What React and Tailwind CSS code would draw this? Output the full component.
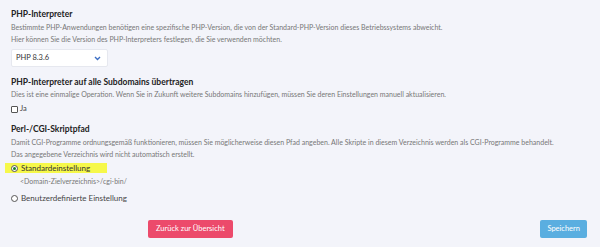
import React, { useState } from "react";

const font = { fontFamily: "Lato, 'Open Sans', sans-serif" };

const App = () => {
  const [php, setPhp] = useState("8.3.6");
  const [applyAll, setApplyAll] = useState(false);
  const [cgiPath, setCgiPath] = useState("default");

  return (
    <div
      className="w-[600px] h-[247px] bg-[#f3f4fa] text-[#333] px-[11px] pt-[8px] overflow-hidden"
      style={font}
    >
      {/* PHP-Interpreter */}
      <h3 className="text-[8.5px] font-bold leading-[12px] text-[#222]">PHP-Interpreter</h3>
      <p className="text-[7px] leading-[12px] text-[#777] mt-[1px]">
        Bestimmte PHP-Anwendungen benötigen eine spezifische PHP-Version, die von der
        Standard-PHP-Version dieses Betriebssystems abweicht.
      </p>
      <p className="text-[7px] leading-[12px] text-[#777]">
        Hier können Sie die Version des PHP-Interpreters festlegen, die Sie verwenden möchten.
      </p>
      <div className="mt-[4px] w-[97px] h-[18px] bg-white border border-[#e6e8ef] rounded-[2px] flex items-center justify-between pl-[4px] pr-[6px]">
        <span className="text-[7.5px] text-[#333]">PHP {php}</span>
        <svg width="7" height="5" viewBox="0 0 7 5" fill="none">
          <path d="M1 1l2.5 2.5L6 1" stroke="#3d6fc4" strokeWidth="1.4" />
        </svg>
      </div>

      {/* Subdomains */}
      <h3 className="text-[8.5px] font-bold leading-[12px] text-[#222] mt-[9px]">
        PHP-Interpreter auf alle Subdomains übertragen
      </h3>
      <p className="text-[7px] leading-[12px] text-[#777]">
        Dies ist eine einmalige Operation. Wenn Sie in Zukunft weitere Subdomains hinzufügen,
        müssen Sie deren Einstellungen manuell aktualisieren.
      </p>
      <label className="flex items-center gap-[2px] mt-[3px] text-[7.5px] leading-[12px] text-[#444]">
        <span
          onClick={() => setApplyAll(!applyAll)}
          className="w-[7px] h-[7px] border border-[#555] rounded-[1px] bg-white"
        />
        Ja
      </label>

      {/* Perl/CGI */}
      <h3 className="text-[8.5px] font-bold leading-[12px] text-[#222] mt-[8px]">
        Perl-/CGI-Skriptpfad
      </h3>
      <p className="text-[7px] leading-[12px] text-[#777] mt-[1px]">
        Damit CGI-Programme ordnungsgemäß funktionieren, müssen Sie möglicherweise diesen Pfad
        angeben. Alle Skripte in diesem Verzeichnis werden als CGI-Programme behandelt.
      </p>
      <p className="text-[7px] leading-[12px] text-[#777]">
        Das angegebene Verzeichnis wird nicht automatisch erstellt.
      </p>
      <div className="mt-[3px] -ml-[6px] w-[102px] h-[10px] bg-[#f6f84a] flex items-center pl-[6px] gap-[3px] text-[8px] text-[#333]">
        <span className="w-[7px] h-[7px] rounded-full border border-[#555] bg-white flex items-center justify-center">
          <span className="w-[3px] h-[3px] rounded-full bg-[#1a7f2a]" />
        </span>
        Standardeinstellung
      </div>
      <p className="text-[7px] leading-[12px] text-[#777] ml-[9px] mt-[2px]">
        &lt;Domain-Zielverzeichnis&gt;/cgi-bin/
      </p>
      <label
        onClick={() => setCgiPath("custom")}
        className="flex items-center gap-[3px] mt-[5px] text-[8px] leading-[12px] text-[#444]"
      >
        <span className="w-[7px] h-[7px] rounded-full border border-[#555] bg-white" />
        Benutzerdefinierte Einstellung
      </label>

      {/* Buttons */}
      <div className="flex justify-between mt-[16px]">
        <button className="ml-[137px] h-[18px] px-[8px] rounded-[2px] bg-[#ec4a6b] text-white text-[7.5px]">
          Zurück zur Übersicht
        </button>
        <button className="mr-[2px] h-[18px] px-[7px] rounded-[2px] bg-[#5aaee0] text-white text-[7.5px]">
          Speichern
        </button>
      </div>
    </div>
  );
};

export default App;
